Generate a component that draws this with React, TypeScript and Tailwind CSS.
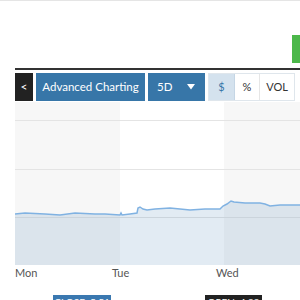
import React from 'react'

const LINE: [number, number][] = [
  [0, 112], [10, 111], [30, 112], [45, 113], [60, 111], [80, 112], [90, 112],
  [105, 113], [106, 111], [107, 113], [115, 112], [122, 111], [123, 106], [125, 105],
  [128, 107], [132, 108], [140, 107], [155, 106], [165, 107], [175, 108], [190, 107],
  [205, 107], [208, 104], [212, 102], [216, 99], [219, 100], [230, 101], [245, 101],
  [250, 102], [255, 104], [265, 103], [285, 103],
]

function Chart() {
  const d = LINE.map(([x, y], i) => `${i ? 'L' : 'M'}${x} ${y}`).join(' ')
  return (
    <svg width="285" height="163" viewBox="0 0 285 163" className="block">
      <rect x="0" y="0" width="105" height="163" fill="#f7f7f7" />
      <rect x="105" y="0" width="104" height="163" fill="#ffffff" />
      <rect x="209" y="0" width="76" height="163" fill="#f7f7f7" />
      {[18, 67, 115].map((y) => (
        <line key={y} x1="0" x2="285" y1={y + 0.5} y2={y + 0.5} stroke="#e4e4e4" />
      ))}
      <path d={`${d} L285 163 L0 163 Z`} fill="#3a78b0" fillOpacity="0.15" />
      <path d={d} fill="none" stroke="#80b2e2" strokeWidth="1.5" />
    </svg>
  )
}

export default function App() {
  return (
    <div
      className="w-[300px] h-[300px] overflow-hidden bg-white border-t border-[#e5e5e5] text-[#333]"
      style={{ fontFamily: 'Lato, "Open Sans", sans-serif' }}
    >
      <div className="flex justify-end pt-[34px]">
        <div className="w-[8px] h-[28px] bg-[#4cb84a]" />
      </div>
      <div className="ml-[15px] mt-[5px] h-[2px] bg-[#333]" />
      <div className="ml-[15px] mt-[3px] flex h-[28px] items-stretch text-[11.5px]">
        <div className="w-[18px] bg-[#222] text-white flex items-center justify-center text-[12px]">&lt;</div>
        <div className="ml-[3px] w-[109px] bg-[#3776a8] text-white flex items-center justify-center">
          Advanced Charting
        </div>
        <div className="ml-[3px] w-[57px] bg-[#3776a8] text-white flex items-center pl-[9px]">
          <span>5D</span>
          <svg width="8" height="6" viewBox="0 0 8 6" className="ml-[15px]">
            <path d="M0 0 L8 0 L4 5.5 Z" fill="#fff" />
          </svg>
        </div>
        <div className="ml-[3px] flex border border-[#dfe6ec] text-[11px]">
          <div className="w-[26px] bg-[#d4e2ee] border-r border-[#c5d6e5] text-[#3776a8] flex items-center justify-center">$</div>
          <div className="w-[25px] border-r border-[#e6e6e6] flex items-center justify-center">%</div>
          <div className="w-[34px] flex items-center justify-center">VOL</div>
        </div>
      </div>
      <div className="ml-[15px] mt-px">
        <Chart />
      </div>
      <div className="ml-[15px] flex h-[16px] items-center text-[11px] text-[#555]">
        <span className="w-[97px]">Mon</span>
        <span className="w-[104px]">Tue</span>
        <span>Wed</span>
      </div>
      <div className="ml-[53px] mt-[14px] flex text-[10px] leading-[14px] whitespace-nowrap">
        <div className="w-[58px] bg-[#3a78b0] text-white text-center">CLOSE: 5.51</div>
        <div className="ml-[94px] w-[57px] bg-[#222] text-white text-center">OPEN: 4.99</div>
      </div>
    </div>
  )
}
